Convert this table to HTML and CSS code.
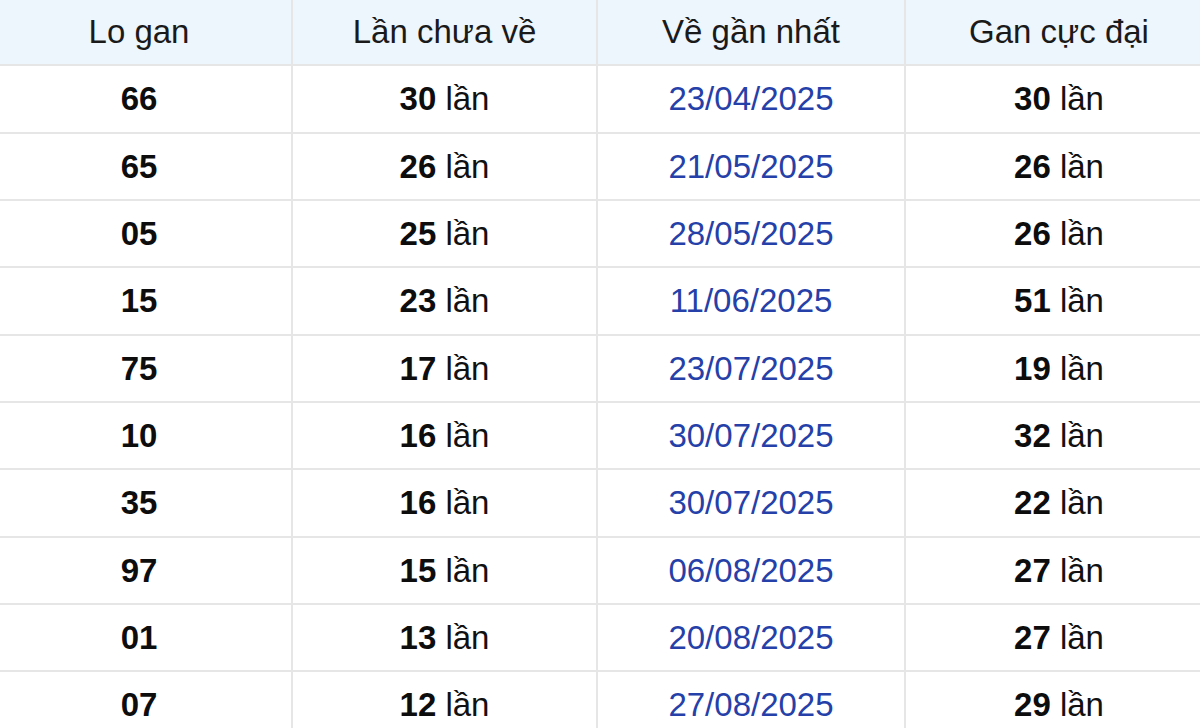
FILE: index.html
```html
<!DOCTYPE html>
<html lang="vi">
<head>
<meta charset="utf-8">
<link rel="stylesheet" href="styles.css">
</head>
<body>
<table class="gan-table">
  <colgroup>
    <col class="c1"><col class="c2"><col class="c3"><col class="c4">
  </colgroup>
  <thead>
    <tr><th>Lo gan</th><th>Lần chưa về</th><th>Về gần nhất</th><th>Gan cực đại</th></tr>
  </thead>
  <tbody>
    <tr><td><b>66</b></td><td><b>30</b> lần</td><td class="date">23/04/2025</td><td><b>30</b> lần</td></tr>
    <tr><td><b>65</b></td><td><b>26</b> lần</td><td class="date">21/05/2025</td><td><b>26</b> lần</td></tr>
    <tr><td><b>05</b></td><td><b>25</b> lần</td><td class="date">28/05/2025</td><td><b>26</b> lần</td></tr>
    <tr><td><b>15</b></td><td><b>23</b> lần</td><td class="date">11/06/2025</td><td><b>51</b> lần</td></tr>
    <tr><td><b>75</b></td><td><b>17</b> lần</td><td class="date">23/07/2025</td><td><b>19</b> lần</td></tr>
    <tr><td><b>10</b></td><td><b>16</b> lần</td><td class="date">30/07/2025</td><td><b>32</b> lần</td></tr>
    <tr><td><b>35</b></td><td><b>16</b> lần</td><td class="date">30/07/2025</td><td><b>22</b> lần</td></tr>
    <tr><td><b>97</b></td><td><b>15</b> lần</td><td class="date">06/08/2025</td><td><b>27</b> lần</td></tr>
    <tr><td><b>01</b></td><td><b>13</b> lần</td><td class="date">20/08/2025</td><td><b>27</b> lần</td></tr>
    <tr><td><b>07</b></td><td><b>12</b> lần</td><td class="date">27/08/2025</td><td><b>29</b> lần</td></tr>
  </tbody>
</table>
</body>
</html>
```
FILE: styles.css
```css
html, body {
  margin: 0;
  padding: 0;
  background: #ffffff;
  overflow: hidden;
}
.gan-table {
  border-collapse: collapse;
  table-layout: fixed;
  width: 1227px;
  margin-left: -15px;
  margin-top: -3px;
  font-family: "Liberation Sans", Arial, sans-serif;
  font-size: 33px;
  color: #111111;
}
.c1 { width: 306px; }
.c2 { width: 305px; }
.c3 { width: 308px; }
.c4 { width: 308px; }
.gan-table th,
.gan-table td {
  border: 2px solid #e6e6e6;
  text-align: center;
  vertical-align: middle;
  padding: 0;
  height: 65.33px;
  line-height: 1;
}
.gan-table th {
  background: #eef6fd;
  font-weight: normal;
  color: #1a1a1a;
}
.gan-table td b {
  font-weight: bold;
  color: #0d0d0d;
}
.gan-table td.date {
  color: #2540a8;
}
```
